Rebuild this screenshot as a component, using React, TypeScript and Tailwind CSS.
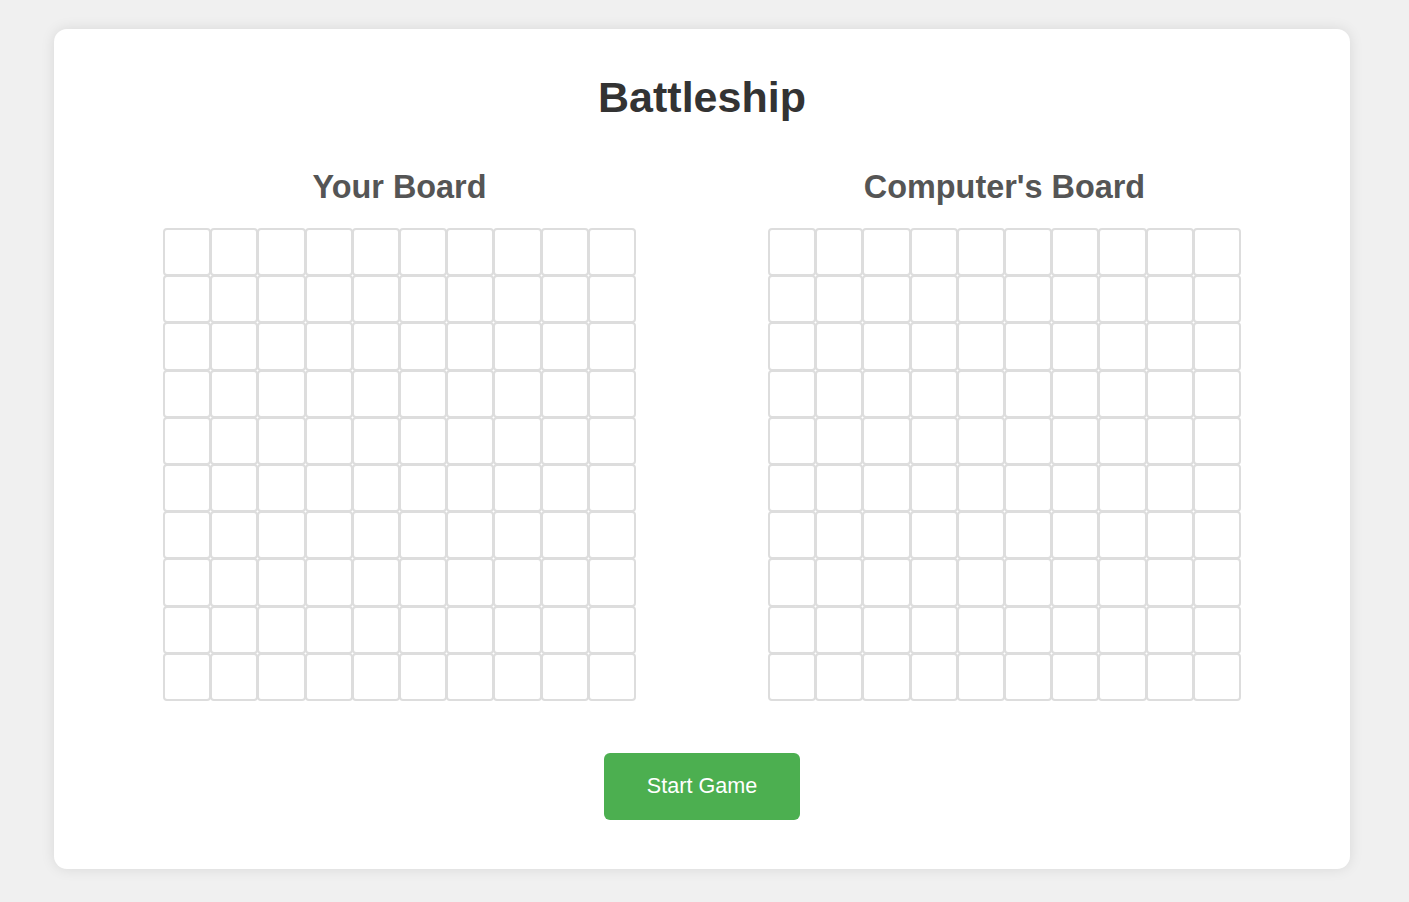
import React from "react";

function Board({ title }: { title: string }) {
  const cells = Array.from({ length: 100 }, (_, i) => i);
  return (
    <div className="flex flex-col items-center">
      <h2 className="text-[32.4px] leading-[37px] font-bold text-[#555] m-0">{title}</h2>
      <div className="mt-[22px] w-[473px] h-[473px] grid grid-cols-[repeat(10,47.2px)] grid-rows-[repeat(10,47.2px)]">
        {cells.map((i) => (
          <div key={i} className="w-[48.2px] h-[48.2px] border-2 border-[#dddddd] rounded-[4px]" />
        ))}
      </div>
    </div>
  );
}

export default function App() {
  return (
    <div
      className="min-h-[902px] w-full bg-[#f0f0f0] pt-[29px] pb-[33px]"
      style={{ fontFamily: '"Liberation Sans", Arial, sans-serif' }}
    >
      <div className="ml-[54px] w-[1296px] h-[840px] bg-white rounded-[13px] shadow-[0_0_14px_rgba(0,0,0,0.1)] pt-[44px] flex flex-col items-center">
        <h1 className="text-[43px] leading-[49px] font-bold text-[#333] m-0">Battleship</h1>
        <div className="mt-[47px] flex justify-center gap-[132px]">
          <Board title="Your Board" />
          <Board title="Computer's Board" />
        </div>
        <button className="mt-[52px] w-[196px] h-[67px] bg-[#4caf50] text-white text-[21.6px] rounded-[6px] flex items-center justify-center">
          Start Game
        </button>
      </div>
    </div>
  );
}
